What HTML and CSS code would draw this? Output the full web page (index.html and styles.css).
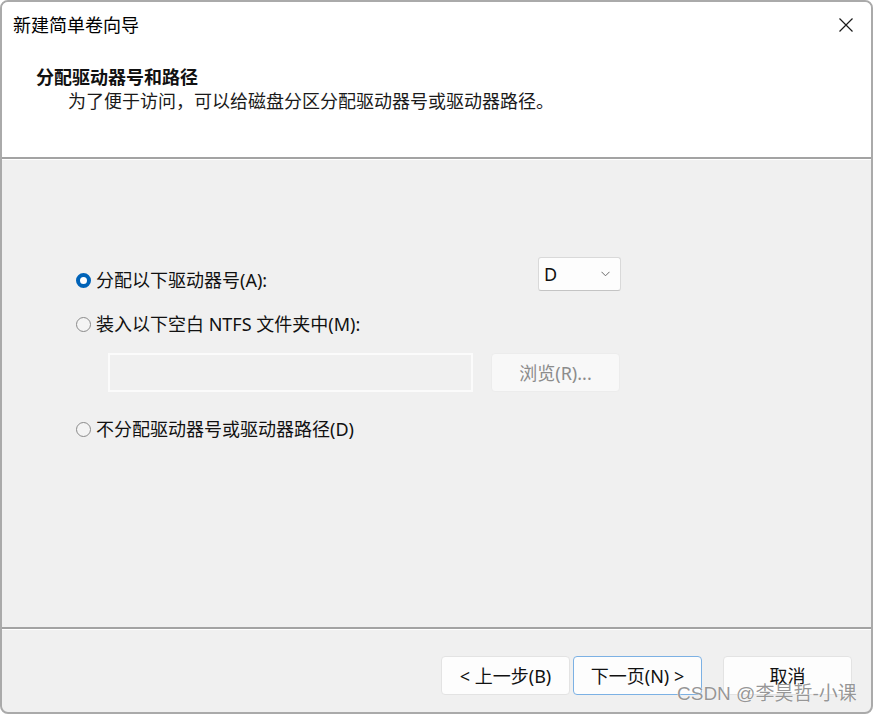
FILE: index.html
```html
<!DOCTYPE html>
<html lang="zh-CN">
<head>
<meta charset="utf-8">
<title>新建简单卷向导</title>
<link rel="stylesheet" href="styles.css">
</head>
<body>
<div class="window">
  <div class="header">
    <div class="titlebar">
      <span class="title">新建简单卷向导</span>
      <svg class="close" width="14" height="14" viewBox="0 0 14 14"><path d="M0.5 0.5 L13.5 13.5 M13.5 0.5 L0.5 13.5" stroke="#1a1a1a" stroke-width="1.2" fill="none"/></svg>
    </div>
    <div class="heading">分配驱动器号和路径</div>
    <div class="subtitle">为了便于访问，可以给磁盘分区分配驱动器号或驱动器路径。</div>
  </div>
  <div class="sep"></div>
  <div class="content">
    <div class="row row-first">
      <label class="opt opt-first"><span class="radio checked"></span><span>分配以下驱动器号(A):</span></label>
      <div class="select"><span>D</span><svg width="9" height="6" viewBox="0 0 9 6"><path d="M0.5 0.8 L4.5 4.8 L8.5 0.8" stroke="#6a6a6a" stroke-width="1" fill="none"/></svg></div>
    </div>
    <label class="opt opt-second"><span class="radio"></span><span>装入以下空白 NTFS 文件夹中(M):</span></label>
    <div class="row row-path">
      <div class="textbox"></div>
      <div class="btn btn-disabled">浏览(R)...</div>
    </div>
    <label class="opt opt-third"><span class="radio"></span><span>不分配驱动器号或驱动器路径(D)</span></label>
  </div>
  <div class="sep"></div>
  <div class="footer">
    <div class="btn">&lt; 上一步(B)</div>
    <div class="btn btn-default">下一页(N) &gt;</div>
    <div class="btn btn-cancel">取消</div>
  </div>
  <div class="watermark">CSDN @李昊哲-小课</div>
</div>
</body>
</html>
```
FILE: styles.css
```css
html, body {
  margin: 0;
  padding: 0;
  background: #ffffff;
}
body {
  font-family: "Noto Sans", "Noto Sans CJK SC", sans-serif;
  font-size: 18px;
  color: #111;
}
.window {
  position: relative;
  width: 873px;
  height: 714px;
  box-sizing: border-box;
  border: 2px solid #aaaaaa;
  border-radius: 8px;
  overflow: hidden;
  display: flex;
  flex-direction: column;
  background: #f0f0f0;
}
.header {
  height: 155px;
  box-sizing: border-box;
  background: #ffffff;
  padding-top: 11px;
}
.titlebar {
  display: flex;
  justify-content: space-between;
  align-items: center;
  height: 24px;
  padding: 0 18px 0 11px;
}
.title {
  line-height: 24px;
  color: #000;
}
.close {
  display: block;
}
.heading {
  margin-top: 28px;
  padding-left: 34px;
  font-weight: 700;
  line-height: 24px;
  color: #111;
}
.subtitle {
  padding-left: 66px;
  line-height: 24px;
  color: #1a1a1a;
}
.sep {
  height: 0;
  border-top: 2px solid #a3a3a3;
  border-bottom: 1px solid #ffffff;
}
.content {
  flex: 1;
  padding: 97px 0 0 74px;
  box-sizing: border-box;
}
.row {
  display: flex;
}
.row-first {
  display: grid;
  grid-template-columns: 462px 83px;
  height: 34px;
  align-items: start;
}
.opt {
  display: flex;
  align-items: center;
  gap: 5px;
  height: 24px;
  line-height: 24px;
  color: #111;
}
.opt-first {
  margin-top: 11px;
}
.opt-second {
  margin-top: 21px;
}
.opt-third {
  margin-top: 25px;
}
.radio {
  width: 15px;
  height: 15px;
  box-sizing: border-box;
  border-radius: 50%;
  border: 1px solid #8a8a8a;
  background: #f4f4f4;
  flex: none;
}
.radio.checked {
  border: 4.5px solid #0063b8;
  background: #ffffff;
}
.select {
  height: 34px;
  box-sizing: border-box;
  background: #fdfdfd;
  border: 1px solid #d9d9d9;
  border-bottom-color: #c4c4c4;
  border-radius: 3px;
  display: flex;
  align-items: center;
  justify-content: space-between;
  padding: 0 10px 0 5px;
  color: #111;
}
.select svg {
  display: block;
}
.row-path {
  margin-top: 17px;
  padding-left: 32px;
  gap: 18px;
  height: 39px;
}
.textbox {
  width: 365px;
  height: 39px;
  box-sizing: border-box;
  border: 2px solid #fbfbfb;
  background: #f0f0f0;
}
.btn {
  width: 129px;
  height: 39px;
  box-sizing: border-box;
  border: 1px solid #e3e3e3;
  border-radius: 4px;
  background: #fdfdfd;
  display: flex;
  align-items: center;
  justify-content: center;
  color: #111;
  line-height: 24px;
}
.btn-disabled {
  background: #f8f8f8;
  border-color: #ececec;
  color: #8c8c8c;
}
.footer {
  height: 82px;
  box-sizing: border-box;
  padding: 26px 19px 0 0;
  display: flex;
  justify-content: flex-end;
  align-items: flex-start;
  gap: 3px;
}
.btn-default {
  border-color: #7cb1e4;
}
.btn-cancel {
  margin-left: 18px;
}
.watermark {
  position: absolute;
  left: 675px;
  top: 680px;
  font-family: "Liberation Sans", "Noto Sans CJK SC", sans-serif;
  font-size: 19px;
  line-height: 24px;
  color: rgba(115, 115, 115, 0.75);
  text-shadow: 0 0 1px #ffffff, 0 0 1px #ffffff;
  white-space: nowrap;
}
```
